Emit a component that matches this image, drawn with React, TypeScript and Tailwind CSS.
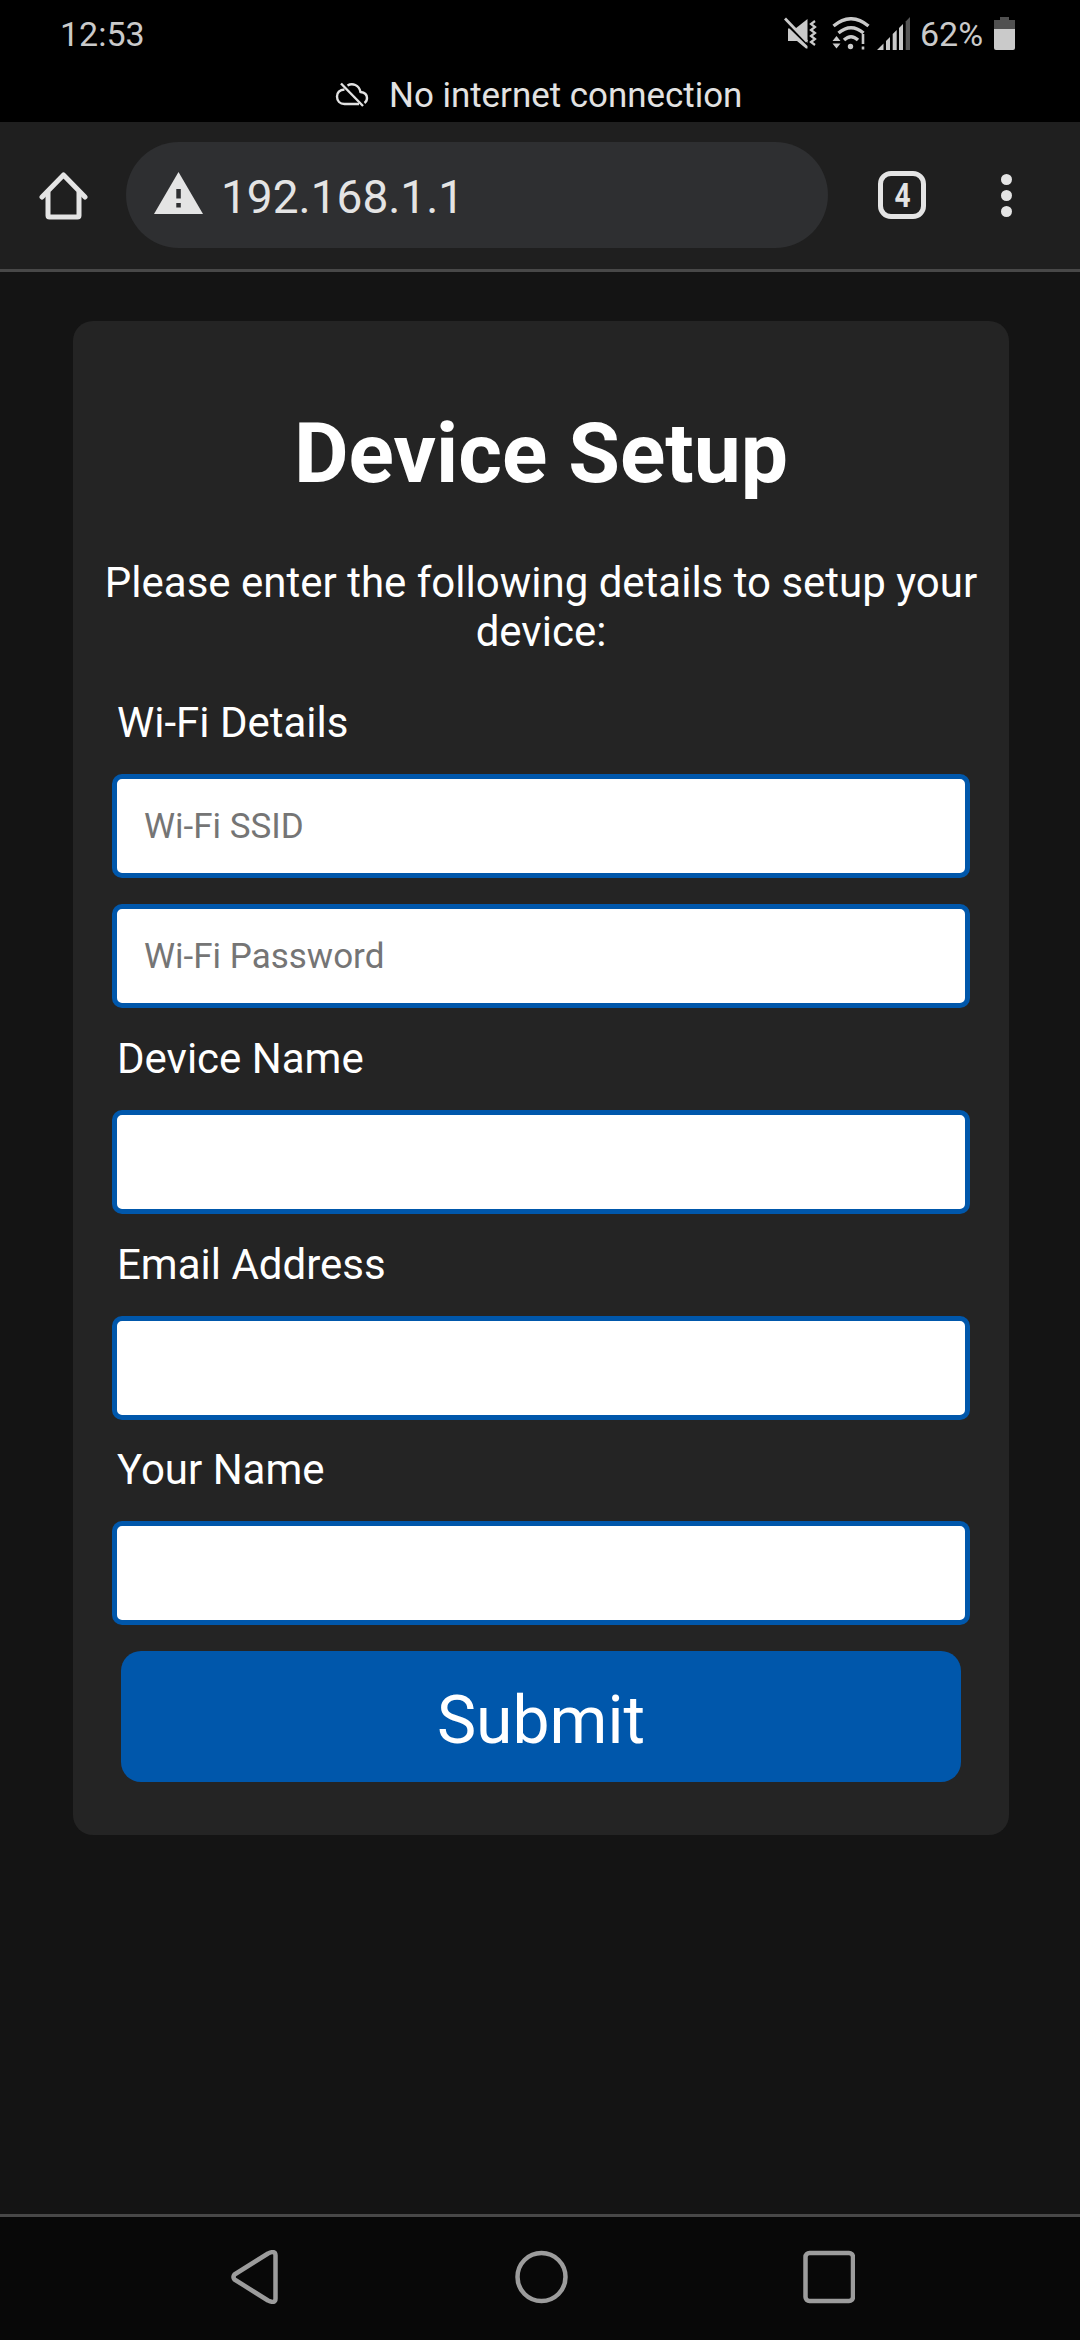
import React from "react";

function MuteIcon() {
  return (
    <svg className="h-[32px] w-[34px]" viewBox="0 0 34 32" fill="none">
      <path d="M23.500 2v24L11.500 11.500z" fill="#cacaca" />
      <path d="M1 1.500L23 24.500" stroke="#cacaca" strokeWidth="2.800" />
      <path d="M4 11.500h1.500L23.500 29v2.500h-1.500L13 24H4z" fill="#cacaca" />
      <path d="M31 4l-4 3 4 3-4 3 4 3-4 3 4 3-4 3 4 3" stroke="#cacaca" strokeWidth="2.200" />
    </svg>
  );
}

function WifiIcon() {
  return (
    <svg className="h-[33px] w-[38px]" viewBox="0 0 38 33" fill="none">
      <g stroke="#cacaca" strokeWidth="3.400">
        <path d="M1.500 9Q19-5.500 36.500 9" />
        <path d="M6.500 16Q19 5.500 31.500 16" />
        <path d="M12 23Q19 16.500 26 23" />
      </g>
      <circle cx="18.500" cy="29.500" r="2.700" fill="#cacaca" />
      <path d="M0.500 24L4.500 19l4 5zM0.500 26.500L4.500 31.500l4-5z" fill="#cacaca" />
      <path d="M31 17v10M31 29.500v3" stroke="#cacaca" strokeWidth="2.600" />
    </svg>
  );
}

function SignalIcon() {
  return (
    <svg className="h-[33px] w-[33px]" viewBox="0 0 33 33">
      <path d="M0 33l6.500-6.500V33zM9 24l4-4v13H9zM15.700 17l4-4v20h-4zM22 11l4-4v26h-4z" fill="#cacaca" />
      <path d="M28.700 4.500L33 0v33h-4.300z" fill="#555" />
    </svg>
  );
}

function StatusBar() {
  return (
    <header className="h-[122px] bg-black">
      <div className="flex h-[68px] items-start pl-[60px] pr-[65px] text-[34px] leading-[40px] text-[#cacaca]">
        <span className="mt-[14px]">12:53</span>
        <div className="ml-auto flex">
          <div className="mt-[17px]"><MuteIcon /></div>
          <div className="ml-[14px] mt-[17px]"><WifiIcon /></div>
          <div className="ml-[7px] mt-[17px]"><SignalIcon /></div>
          <span className="ml-[10px] mt-[14px] w-[74px]">62%</span>
          <div className="mt-[17px] flex h-[33px] w-[21px] flex-col items-center">
            <div className="h-[3px] w-[9px] bg-[#505050]" />
            <div className="h-[9px] w-full bg-[#505050]" />
            <div className="w-full flex-1 rounded-b-[2px] bg-[#cacaca]" />
          </div>
        </div>
      </div>
      <div className="flex h-[54px] items-start pl-[335px] text-[#e2e2e2]">
        <svg className="mt-[14px] h-[26px] w-[34px]" viewBox="0 0 34 26" fill="none" stroke="#e2e2e2" strokeWidth="2.400">
          <path d="M9.500 7.500C4.500 7.500 2 11 2 14.500 2 19 5 22 9.500 22H24" />
          <path d="M12.500 3.500c5-3 11.500-.5 13 6.500 4.500.5 6.500 3 6.500 6 0 2-1 4-2.500 5" />
          <path d="M6 1.500L28 24" />
        </svg>
        <span className="ml-[20px] mt-[8px] whitespace-nowrap text-[34.900px] leading-[40px]">No internet connection</span>
      </div>
    </header>
  );
}

function Toolbar() {
  return (
    <div className="flex h-[150px] items-center border-b-[3px] border-[#484848] bg-[#1f1f1f] pb-px pl-[39px]">
      <svg className="h-[49px] w-[49px]" viewBox="0 0 49 49" fill="none" stroke="#e4e4e4" strokeWidth="5" strokeLinejoin="round">
        <path d="M3 26L24.500 4 46 26" strokeLinecap="round" />
        <path d="M9 21v23.500q0 1.500 1.500 1.500h28q1.500 0 1.500-1.500V21" />
      </svg>
      <div className="ml-[38px] flex h-[106px] w-[702px] items-center rounded-full bg-[#2e2f31] pl-[28px]">
        <svg className="mb-[5px] h-[42px] w-[49px]" viewBox="0 0 49 42">
          <path d="M24.500 0L49 42H0z" fill="#e4e4e4" />
          <path d="M22.300 17h4.500v9.500h-4.500zM22.300 31h4.500v4.500h-4.500z" fill="#2e2f31" />
        </svg>
        <span className="ml-[18px] mt-[4px] text-[46px] leading-[54px] text-[#e4e4e4]">192.168.1.1</span>
      </div>
      <div className="ml-[50px] flex h-[48px] w-[48px] items-center justify-center rounded-[13px] border-[5px] border-[#e4e4e4] text-[33px] font-bold leading-none text-[#e4e4e4]">
        <span className="scale-x-[0.85]">4</span>
      </div>
      <div className="ml-[75px] flex flex-col gap-[5px]">
        <div className="size-[11px] rounded-full bg-[#e4e4e4]" />
        <div className="size-[11px] rounded-full bg-[#e4e4e4]" />
        <div className="size-[11px] rounded-full bg-[#e4e4e4]" />
      </div>
    </div>
  );
}

const inputClass =
  "block h-[104px] w-full rounded-[10px] border-[5px] border-[#0057ab] bg-white px-[27px] text-[35px] text-black outline-none placeholder:text-[#757575]";

function Field({ label }: { label: string }) {
  return (
    <label className="-mb-[0.5px] block">
      <span className="block pb-[27px] pl-[5px] pt-[26px] text-[42px] leading-[49px]">{label}</span>
      <input className={inputClass} />
    </label>
  );
}

export default function App() {
  return (
    <div className="flex h-[2340px] w-[1080px] flex-col bg-[#141414] font-['Roboto',sans-serif]">
      <StatusBar />
      <Toolbar />
      <main className="flex-1 pl-[73px] pt-[49px] text-white">
        <form className="h-[1514px] w-[936px] rounded-[20px] bg-[#242424] px-[27px] pt-[84px]" onSubmit={(e) => e.preventDefault()}>
          <h1 className="text-center text-[84px] font-bold leading-[98px]">Device Setup</h1>
          <p className="mt-[55px] text-center text-[42px] leading-[49px]">
            Please enter the following details to setup your device:
          </p>
          <div className="px-[12px]">
            <h2 className="pb-[27px] pl-[5px] pt-[42px] text-[42px] leading-[49px]">Wi-Fi Details</h2>
            <input className={inputClass} placeholder="Wi-Fi SSID" />
            <input className={inputClass + " mt-[26px]"} placeholder="Wi-Fi Password" />
            <Field label="Device Name" />
            <Field label="Email Address" />
            <Field label="Your Name" />
            <button className="ml-[9px] mt-[26.500px] block h-[131px] w-[840px] rounded-[20px] bg-[#0057ab] pt-[8px] text-[66px] leading-[76px]">
              Submit
            </button>
          </div>
        </form>
      </main>
      <nav className="flex h-[126px] items-start border-t-[3px] border-[#484848] bg-[#080808] pl-[230px] pt-[33px]">
        <svg className="h-[54px] w-[625px]" viewBox="0 0 625 54" fill="none" stroke="#9c9c9c" strokeWidth="4.500" strokeLinejoin="round">
          <path d="M4.500 24.500Q2.500 27 4.500 29.500L38 50.500Q45.500 54 45.500 48.500V5.500Q45.500 0 38 3.500z" />
          <circle cx="311.500" cy="27" r="24" />
          <rect x="575.500" y="3" width="47.500" height="48" rx="4" />
        </svg>
      </nav>
    </div>
  );
}
